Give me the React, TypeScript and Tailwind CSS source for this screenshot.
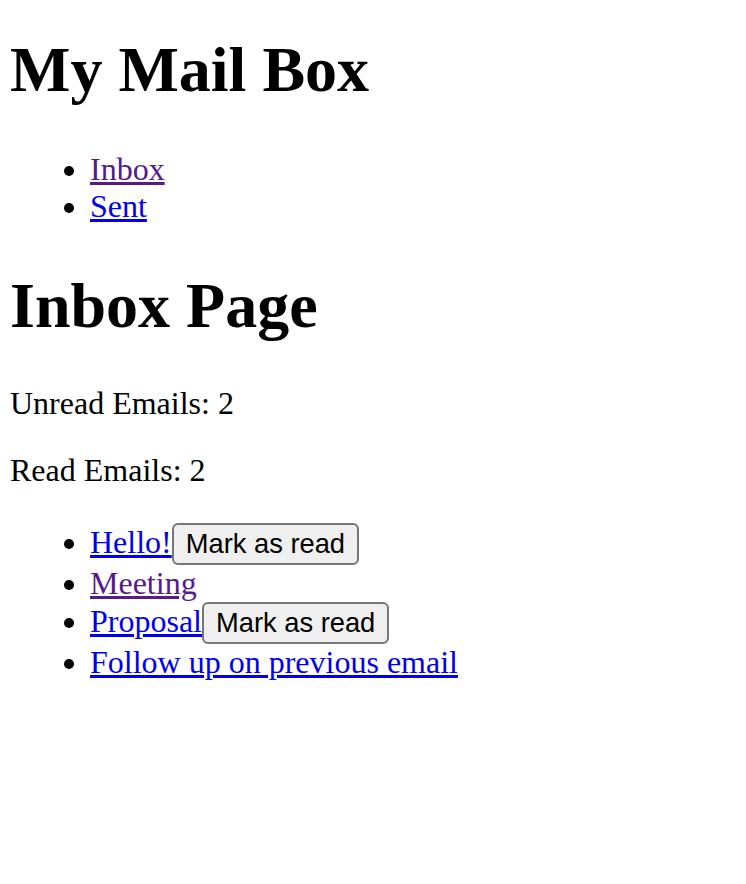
import React from 'react';

interface Email {
  id: number;
  subject: string;
  read: boolean;
}

const emails: Email[] = [
  { id: 1, subject: 'Hello!', read: false },
  { id: 2, subject: 'Meeting', read: true },
  { id: 3, subject: 'Proposal', read: false },
  { id: 4, subject: 'Follow up on previous email', read: true },
];

const linkClass = 'underline text-[#0000ee]';
const visitedClass = 'underline text-[#551a8b]';

export default function App() {
  const unread = emails.filter((e) => !e.read).length;
  const read = emails.length - unread;

  return (
    <div className="px-[10px] pt-[33px] pb-10 font-['Liberation_Serif',serif] text-[32px] leading-[37px] text-black bg-white min-h-[884px]">
      <h1 className="text-[64px] leading-[74px] font-bold">My Mail Box</h1>
      <ul className="list-disc pl-[80px] mt-[44px]">
        <li>
          <a href="#" className={visitedClass}>Inbox</a>
        </li>
        <li>
          <a href="#" className={linkClass}>Sent</a>
        </li>
      </ul>

      <h1 className="text-[64px] leading-[74px] font-bold mt-[44px]">Inbox Page</h1>
      <p className="mt-[42px]">Unread Emails: {unread}</p>
      <p className="mt-[30px]">Read Emails: {read}</p>

      <ul className="list-disc pl-[80px] mt-[34px]">
        {emails.map((email) => (
          <li key={email.id}>
            <a href="#" className={email.id === 2 ? visitedClass : linkClass}>
              {email.subject}
            </a>
            {!email.read && (
              <button className="inline-block align-baseline bg-[#efefef] border-2 border-[#767676] rounded-[6px] px-[12px] py-0 text-[27.3px] leading-[38px] font-['Liberation_Sans',Arial,sans-serif] text-black">
                Mark as read
              </button>
            )}
          </li>
        ))}
      </ul>
    </div>
  );
}
